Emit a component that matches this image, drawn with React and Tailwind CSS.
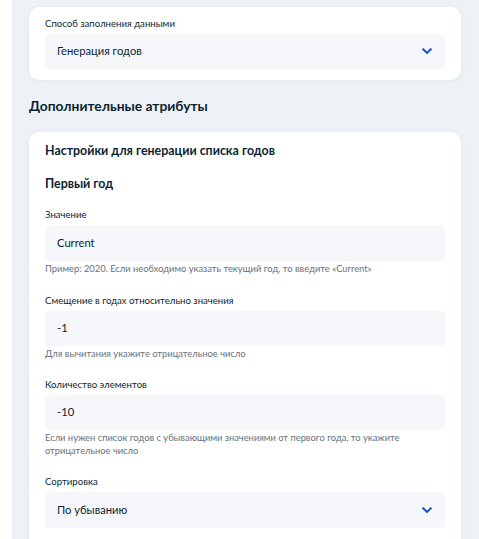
import React from "react";

const Chevron = () => (
  <svg width="10" height="7" viewBox="0 0 10 7" fill="none">
    <path d="M1.2 1.3L5 5L8.8 1.3" stroke="#0d4cd3" strokeWidth="1.9" strokeLinecap="square" />
  </svg>
);

const Box = ({ children, select, h = "h-[35px]" }) => (
  <div className={`${h} mt-[3px] rounded-[4px] bg-[#f5f7fa] flex items-center pl-[12px] pr-[13px] text-[11.2px] text-[#0b1f33]`}>
    <span className="flex-1">{children}</span>
    {select && <Chevron />}
  </div>
);

const Label = ({ children }) => (
  <div className="text-[9.6px] leading-[14px] text-[#0b1f33]">{children}</div>
);

const Hint = ({ children }) => (
  <div className="mt-[2px] text-[9.35px] leading-[12.5px] text-[#66727f]">{children}</div>
);

export default function App() {
  return (
    <div className="w-[479px] h-[539px] overflow-hidden flex" style={{ fontFamily: "Lato, 'Noto Sans', sans-serif" }}>
      <div className="w-[12px] bg-white shrink-0" />
      <div className="flex-1 bg-[#eef2f7] pl-[17px] pr-[18px] pt-[7px]">
        <div className="bg-white rounded-[10px] px-4 pt-[10px] pb-[11px] shadow-[0_1px_4px_rgba(180,190,210,0.25)]">
          <Label>Способ заполнения данными</Label>
          <Box select>Генерация годов</Box>
        </div>
        <div className="mt-[16px] text-[13.8px] leading-[20px] font-bold text-[#0b1f33]">Дополнительные атрибуты</div>
        <div className="mt-[16px] bg-white rounded-[10px] px-4 pt-[10px] pb-6 shadow-[0_1px_4px_rgba(180,190,210,0.25)]">
          <div className="text-[12.4px] leading-[18px] font-bold text-[#0b1f33]">Настройки для генерации списка годов</div>
          <div className="mt-[15px] text-[12.4px] leading-[18px] font-bold text-[#0b1f33]">Первый год</div>
          <div className="mt-[15px]">
            <Label>Значение</Label>
            <Box h="h-[36px]">Current</Box>
            <Hint>Пример: 2020. Если необходимо указать текущий год, то введите «Current»</Hint>
          </div>
          <div className="mt-[18px]">
            <Label>Смещение в годах относительно значения</Label>
            <Box>-1</Box>
            <Hint>Для вычитания укажите отрицательное число</Hint>
          </div>
          <div className="mt-[18px]">
            <Label>Количество элементов</Label>
            <Box>-10</Box>
            <Hint>Если нужен список годов с убывающими значениями от первого года, то укажите отрицательное число</Hint>
          </div>
          <div className="mt-[18px]">
            <Label>Сортировка</Label>
            <Box select h="h-[36px]">По убыванию</Box>
          </div>
        </div>
      </div>
    </div>
  );
}
